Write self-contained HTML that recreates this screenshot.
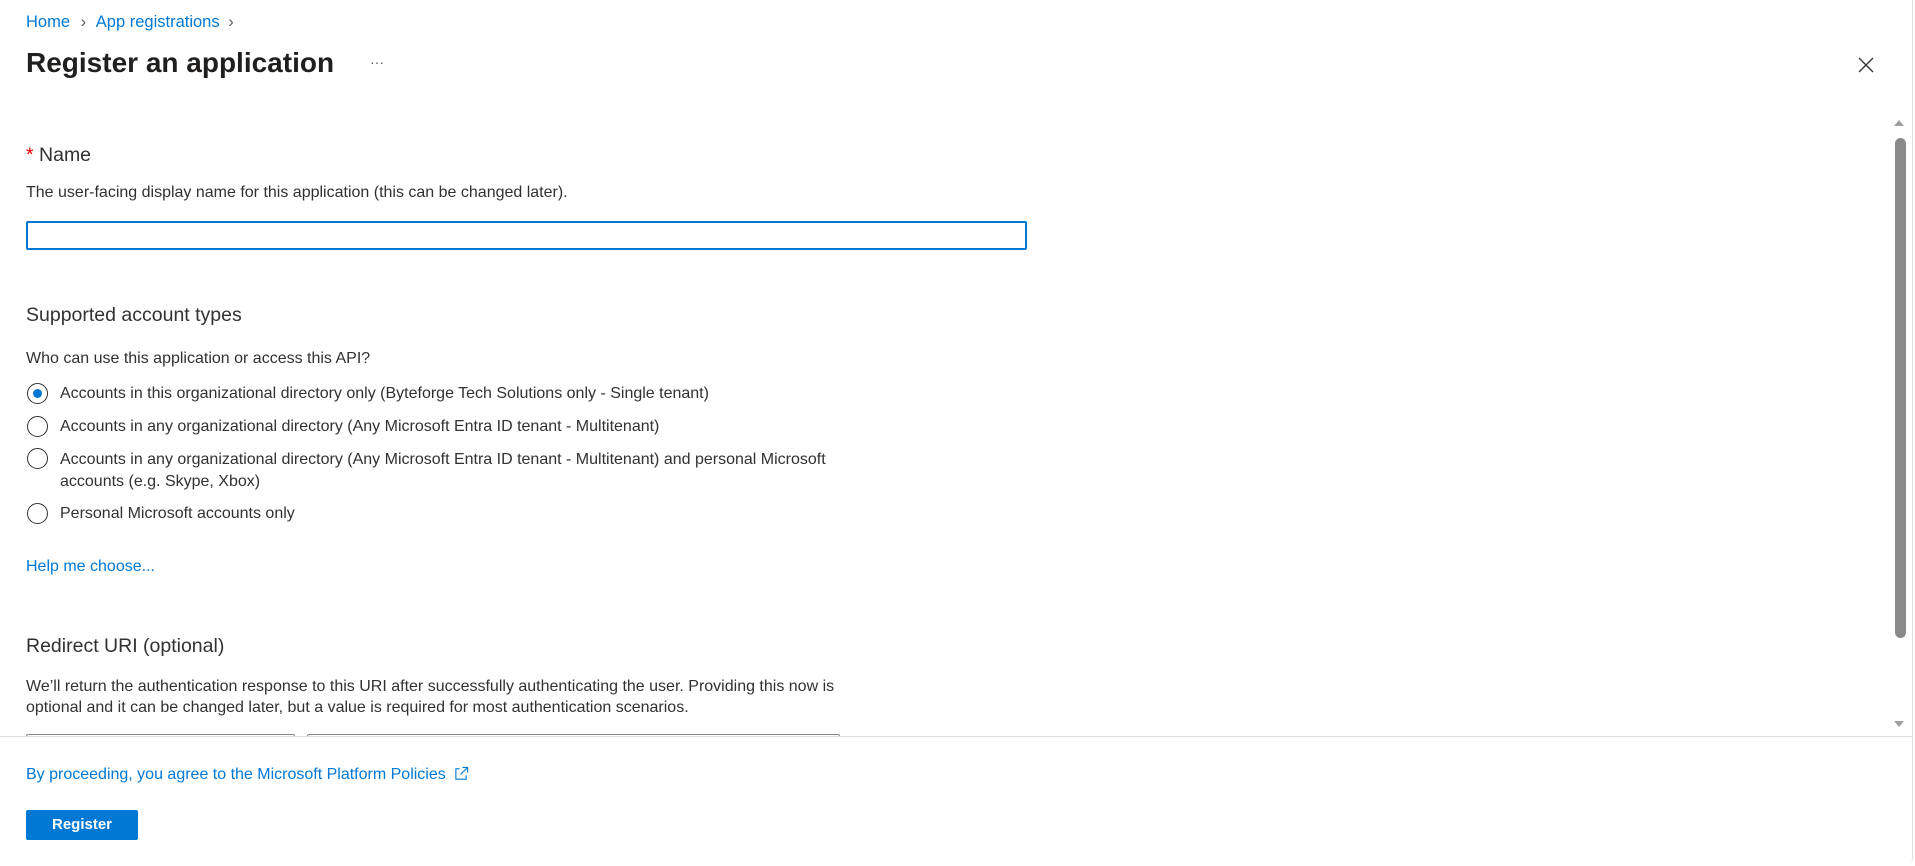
<!DOCTYPE html>
<html><head><meta charset="utf-8"><style>
*{margin:0;padding:0;box-sizing:border-box}
body{width:1915px;height:866px;background:#fff;font-family:"Liberation Sans",sans-serif;color:#323130;position:relative;overflow:hidden}
.a{position:absolute;white-space:nowrap}
.link{color:#0078d4}
.panel{position:absolute;left:0;top:0;width:1913px;height:865px;border-right:1px solid #e1dfdd;border-bottom:1px solid #e1dfdd;border-bottom-right-radius:8px}
.radio{position:absolute;left:27px;width:21px;height:21px;border:1.5px solid #323130;border-radius:50%}
.t{font-size:16px;line-height:20px}
</style></head><body>
<div class="panel"></div>
<div class="a link" style="left:26px;top:13px;font-size:16.5px">Home <span style="color:#605e5c;margin:0 6px">&#x203A;</span> App registrations <span style="color:#605e5c;margin-left:4px">&#x203A;</span></div>
<div class="a" style="left:26px;top:47px;font-size:28px;font-weight:bold;color:#201f1e">Register an application</div>
<div class="a" style="left:370px;top:54px;font-size:14px;color:#605e5c">&middot;&middot;&middot;</div>
<svg class="a" style="left:1858px;top:57px" width="16" height="16" viewBox="0 0 16 16"><path d="M1 1L15 15M15 1L1 15" stroke="#323130" stroke-width="1.3"/></svg>
<div class="a" style="left:1894px;top:120px;width:0;height:0;border-left:5px solid transparent;border-right:5px solid transparent;border-bottom:6px solid #a0a0a0"></div>
<div class="a" style="left:1895px;top:138px;width:11px;height:500px;background:#8a8a8a;border-radius:6px"></div>
<div class="a" style="left:1894px;top:721px;width:0;height:0;border-left:5px solid transparent;border-right:5px solid transparent;border-top:6px solid #a0a0a0"></div>

<div class="a" style="left:26px;top:144px;font-size:19.5px"><span style="color:#e00">*</span> Name</div>
<div class="a t" style="left:26px;top:183px">The user-facing display name for this application (this can be changed later).</div>
<div class="a" style="left:26px;top:221px;width:1001px;height:29px;border:2px solid #0078d4;border-radius:2px"></div>

<div class="a" style="left:26px;top:304px;font-size:19.5px">Supported account types</div>
<div class="a t" style="left:26px;top:349px">Who can use this application or access this API?</div>
<div class="radio" style="top:383px"><div style="position:absolute;left:4.5px;top:4.5px;width:9px;height:9px;border-radius:50%;background:#0078d4"></div></div>
<div class="a t" style="left:60px;top:384px">Accounts in this organizational directory only (Byteforge Tech Solutions only - Single tenant)</div>
<div class="radio" style="top:416px"></div>
<div class="a t" style="left:60px;top:417px">Accounts in any organizational directory (Any Microsoft Entra ID tenant - Multitenant)</div>
<div class="radio" style="top:448px"></div>
<div class="a t" style="left:60px;top:449px;line-height:22px">Accounts in any organizational directory (Any Microsoft Entra ID tenant - Multitenant) and personal Microsoft<br>accounts (e.g. Skype, Xbox)</div>
<div class="radio" style="top:503px"></div>
<div class="a t" style="left:60px;top:504px">Personal Microsoft accounts only</div>
<div class="a t link" style="left:26px;top:557px">Help me choose...</div>

<div class="a" style="left:26px;top:635px;font-size:19.5px">Redirect URI (optional)</div>
<div class="a t" style="left:26px;top:676px;line-height:21px">We’ll return the authentication response to this URI after successfully authenticating the user. Providing this now is<br>optional and it can be changed later, but a value is required for most authentication scenarios.</div>
<div class="a" style="left:26px;top:734px;width:269px;height:10px;border:1px solid #8a8886;border-radius:2px"></div>
<div class="a" style="left:307px;top:734px;width:533px;height:10px;border:1px solid #8a8886;border-radius:2px"></div>
<div class="a" style="left:0;top:736px;width:1912px;height:130px;background:#fff;border-top:1px solid #e1dfdd;border-bottom-right-radius:8px"></div>
<div class="a t link" style="left:26px;top:765px">By proceeding, you agree to the Microsoft Platform Policies
<svg style="vertical-align:-2px;margin-left:4px" width="15" height="15" viewBox="0 0 16 16"><path d="M9 1.5h5.5V7M14.5 1.5L7 9M6 3H2v11h11v-4" fill="none" stroke="#0078d4" stroke-width="1.2"/></svg></div>
<div class="a" style="left:26px;top:810px;width:112px;height:30px;background:#0078d4;border-radius:2px;color:#fff;font-size:15px;font-weight:bold;text-align:center;line-height:30px">Register</div>
</body></html>
